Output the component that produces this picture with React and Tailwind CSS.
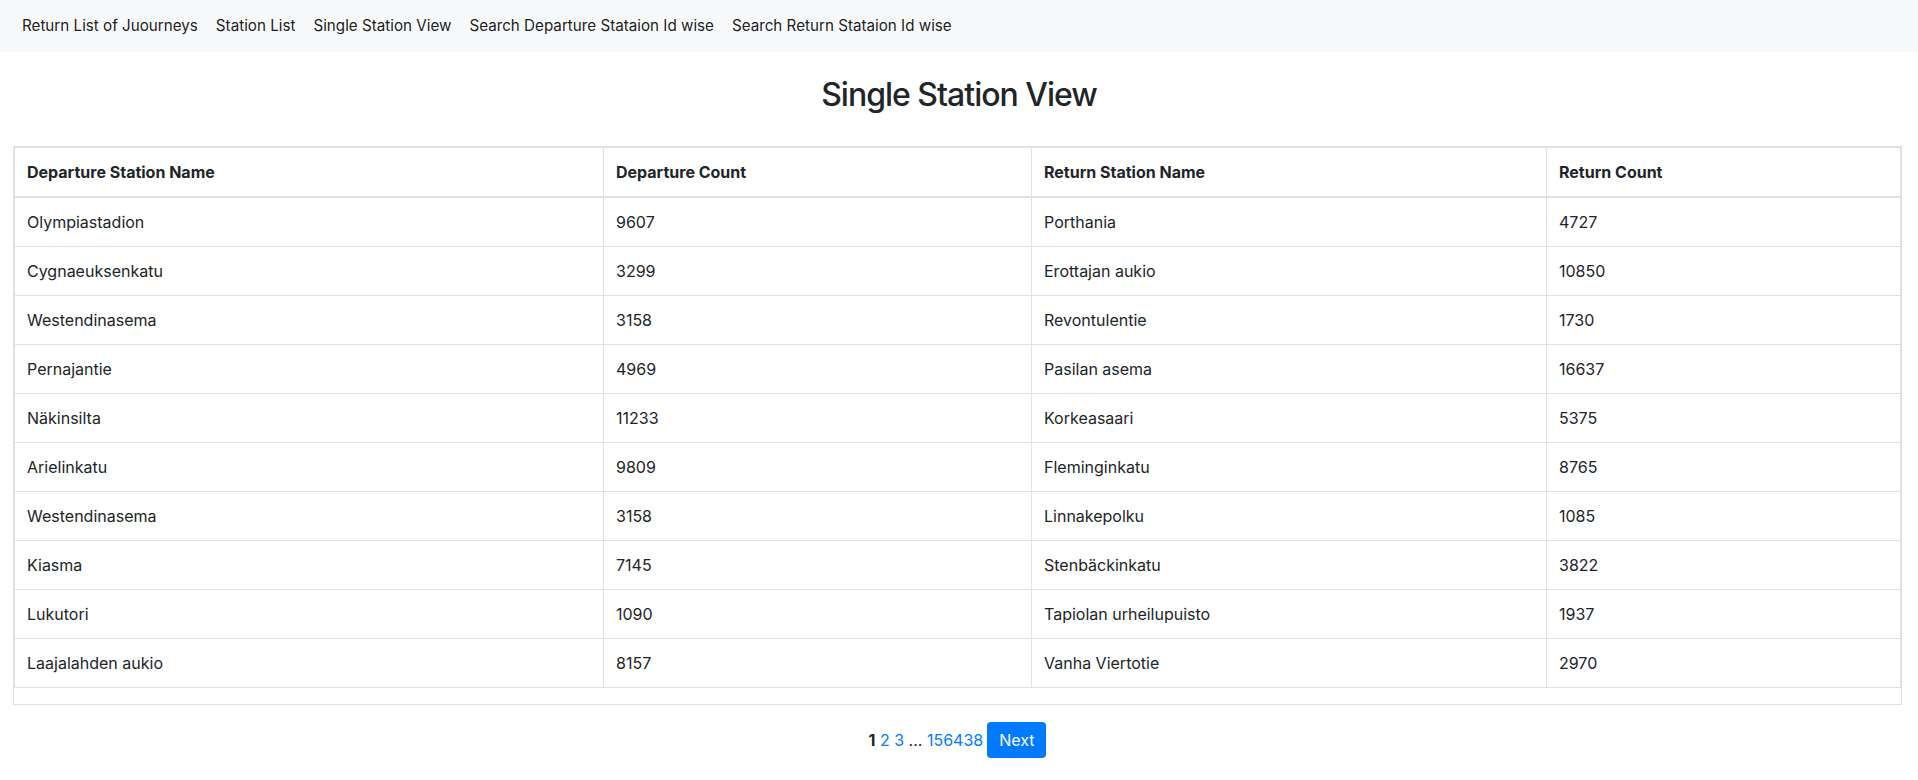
import React from 'react';

const rows = [
  ['Olympiastadion', '9607', 'Porthania', '4727'],
  ['Cygnaeuksenkatu', '3299', 'Erottajan aukio', '10850'],
  ['Westendinasema', '3158', 'Revontulentie', '1730'],
  ['Pernajantie', '4969', 'Pasilan asema', '16637'],
  ['Näkinsilta', '11233', 'Korkeasaari', '5375'],
  ['Arielinkatu', '9809', 'Fleminginkatu', '8765'],
  ['Westendinasema', '3158', 'Linnakepolku', '1085'],
  ['Kiasma', '7145', 'Stenbäckinkatu', '3822'],
  ['Lukutori', '1090', 'Tapiolan urheilupuisto', '1937'],
  ['Laajalahden aukio', '8157', 'Vanha Viertotie', '2970'],
];

const links = [
  'Return List of Juourneys',
  'Station List',
  'Single Station View',
  'Search Departure Stataion Id wise',
  'Search Return Stataion Id wise',
];

function App() {
  return (
    <div className="min-h-screen bg-white text-[#212529] font-['Inter','Liberation_Sans',sans-serif] text-base">
      {/* Top navigation */}
      <nav className="h-[52px] bg-[#f8f9fa] flex items-center px-[13px]">
        {links.map((l) => (
          <a key={l} href="#" className="px-[9px] py-2 leading-6 text-[15.2px] text-[rgba(0,0,0,0.9)]">
            {l}
          </a>
        ))}
      </nav>

      <h2 className="text-center text-[32px] leading-[38px] tracking-[-1px] font-medium mt-6 mb-[32px]">
        Single Station View
      </h2>

      <div className="ml-[13px] mr-[16px] border border-[#dee2e6]">
        <table className="w-full border-collapse mb-4 table-fixed">
          <colgroup>
            <col className="w-[589px]" />
            <col className="w-[428px]" />
            <col className="w-[515px]" />
            <col />
          </colgroup>
          <thead>
            <tr>
              {['Departure Station Name', 'Departure Count', 'Return Station Name', 'Return Count'].map((h) => (
                <th
                  key={h}
                  className="text-left font-bold px-3 py-3 leading-6 border border-[#dee2e6] border-b-2"
                >
                  {h}
                </th>
              ))}
            </tr>
          </thead>
          <tbody>
            {rows.map((r, i) => (
              <tr key={i}>
                {r.map((c, j) => (
                  <td key={j} className="px-3 py-3 leading-6 border border-[#dee2e6]">
                    {c}
                  </td>
                ))}
              </tr>
            ))}
          </tbody>
        </table>
      </div>

      {/* Pagination */}
      <div className="flex justify-center items-center mt-[17px] pr-[3px]">
        <span className="font-bold">1</span>
        <span>&nbsp;</span>
        <a href="#" className="text-[#007bff]">2</a>
        <span>&nbsp;</span>
        <a href="#" className="text-[#007bff]">3</a>
        <span>&nbsp;...&nbsp;</span>
        <a href="#" className="text-[#007bff]">156438</a>
        <button className="ml-1 bg-[#007bff] text-white px-3 py-[6px] leading-6 rounded">Next</button>
      </div>
    </div>
  );
}

export default App;
